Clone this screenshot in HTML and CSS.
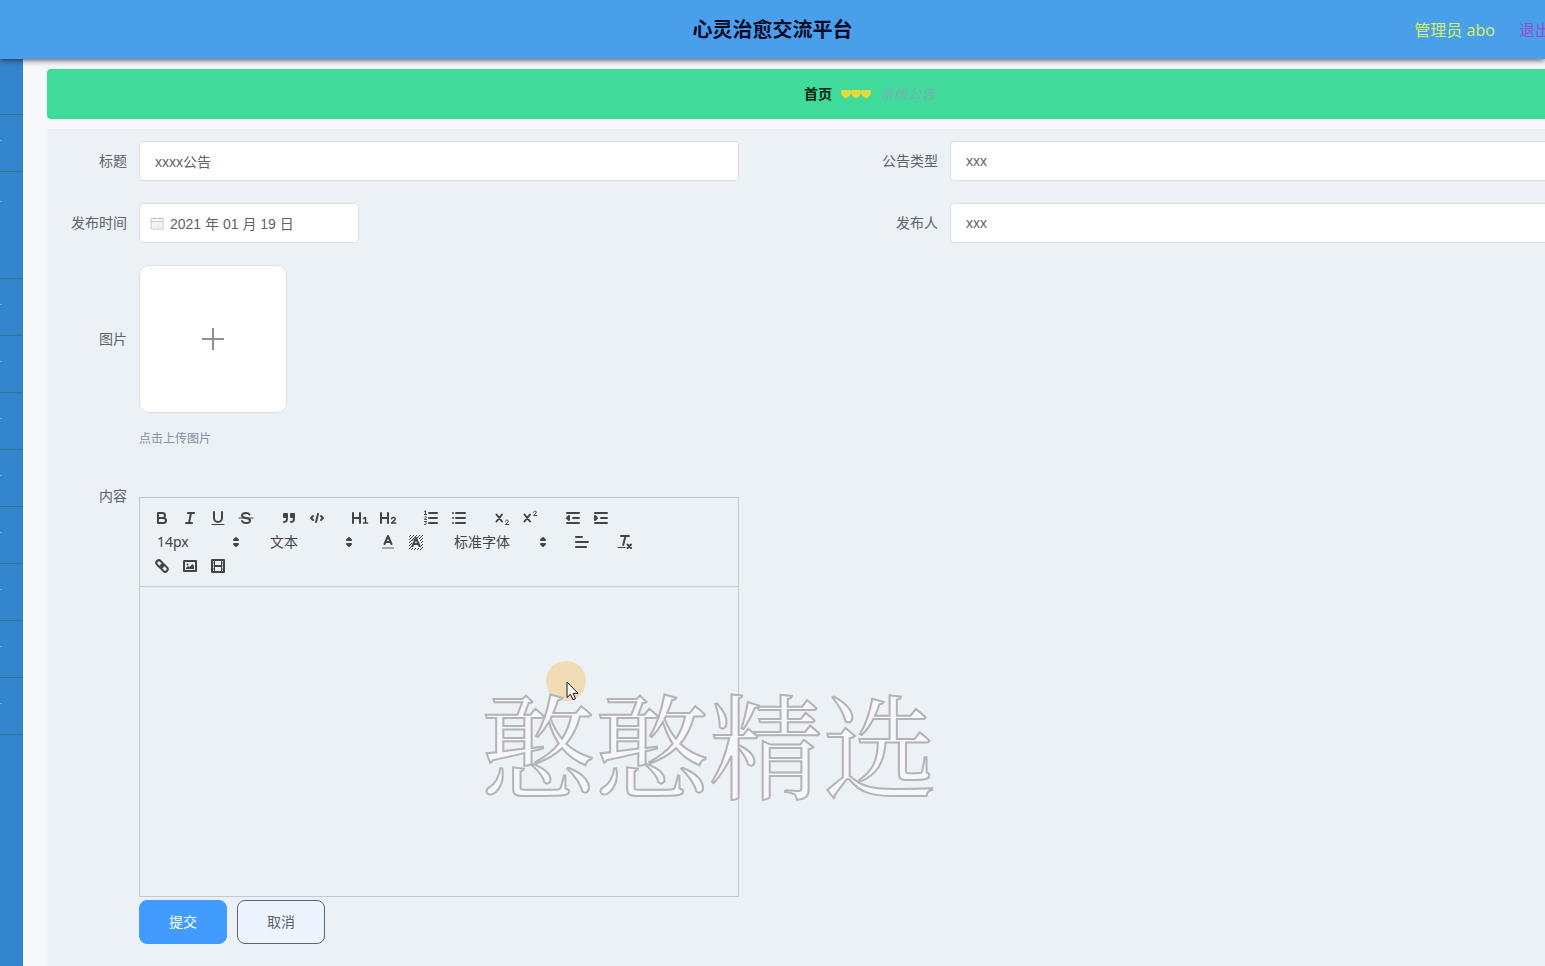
FILE: index.html
```html
<!DOCTYPE html>
<html lang="zh-CN">
<head>
<meta charset="utf-8">
<title>心灵治愈交流平台</title>
<link rel="stylesheet" href="styles.css">
</head>
<body>
<div class="app">
  <header class="topbar">
    <h1 class="topbar-title">心灵治愈交流平台</h1>
    <div class="topbar-user">
      <span class="user-name">管理员 abo</span>
      <a class="logout" href="#">退出登录</a>
    </div>
  </header>
  <div class="shell">
    <nav class="sidebar" aria-label="主菜单">
      <a class="menu-item menu-home" href="#"></a>
      <a class="menu-item" href="#"></a>
      <a class="menu-item menu-tall" href="#"></a>
      <a class="menu-item" href="#"></a>
      <a class="menu-item" href="#"></a>
      <a class="menu-item" href="#"></a>
      <a class="menu-item" href="#"></a>
      <a class="menu-item" href="#"></a>
      <a class="menu-item" href="#"></a>
      <a class="menu-item" href="#"></a>
      <a class="menu-item" href="#"></a>
    </nav>
    <main class="main">
      <div class="content">
        <nav class="breadcrumb" aria-label="面包屑">
          <a class="crumb-home" href="#">首页</a>
          <svg class="hearts" viewBox="0 0 30 10" aria-hidden="true">
            <defs><path id="heart" d="M.4 1.200Q3 .2 5 1.200Q7 .2 9.600 1.200Q10.600 4.200 8.800 6.600Q7 8.800 5 9.500Q3 8.800 1.200 6.600Q-.6 4.200 .4 1.200Z"/></defs>
            <use href="#heart"/><use href="#heart" x="10"/><use href="#heart" x="20"/>
          </svg>
          <span class="crumb-current">系统公告</span>
        </nav>
        <form class="form">
          <div class="field">
            <label class="label" for="title">标题</label>
            <input class="input" id="title" type="text" value="xxxx公告">
          </div>
          <div class="field">
            <label class="label" for="type">公告类型</label>
            <input class="input" id="type" type="text" value="xxx">
          </div>
          <div class="field">
            <label class="label" for="date">发布时间</label>
            <div class="date-box">
              <svg class="date-icon" viewBox="0 0 14 14" aria-hidden="true"><path d="M1 2.500h12v10.500H1zM1 5.500h12M4 1v3M10 1v3M3.500 8h1.500M6.300 8h1.500M9.200 8h1.500M3.500 10.500h1.500M6.300 10.500h1.500M9.200 10.500h1.500"/></svg>
              <input class="date-input" id="date" type="text" value="2021 年 01 月 19 日">
            </div>
          </div>
          <div class="field">
            <label class="label" for="author">发布人</label>
            <input class="input" id="author" type="text" value="xxx">
          </div>
          <div class="field field-row">
            <label class="label label-upload" for="upload">图片</label>
            <div class="upload-block">
              <button class="upload" id="upload" type="button" aria-label="上传图片">
                <svg class="plus" viewBox="0 0 24 24" aria-hidden="true"><path d="M12 1v22M1 12h22"/></svg>
              </button>
              <p class="tip">点击上传图片</p>
            </div>
          </div>
          <div class="field field-row">
            <label class="label label-editor" for="editor">内容</label>
            <div class="editor">
              <div class="toolbar">
                <div class="tools">
                  <button class="tool" type="button" aria-label="粗体"><svg viewBox="0 0 18 18"><path d="M5 4h4.500a2.500 2.500 0 0 1 0 5H5zM5 9h5.500a2.500 2.500 0 0 1 0 5H5z"/></svg></button>
                  <button class="tool" type="button" aria-label="斜体"><svg viewBox="0 0 18 18"><path d="M7 4h6M5 14h6M8 14l2-10"/></svg></button>
                  <button class="tool" type="button" aria-label="下划线"><svg viewBox="0 0 18 18"><path d="M5 3v6a4 4 0 0 0 8 0V3"/><path class="thin" d="M3 15.500h12"/></svg></button>
                  <button class="tool" type="button" aria-label="删除线"><svg viewBox="0 0 18 18"><path class="thin" d="M2 9h14"/><path d="M12.500 5.500C11.800 4.300 10.500 4 9 4 6.500 4 5 5.200 5 6.500 5 8 7 8.600 9 9s4 1 4 2.500S11.500 14 9 14c-2 0-3.200-.6-4-2"/></svg></button>
                </div>
                <div class="tools">
                  <button class="tool" type="button" aria-label="引用"><svg viewBox="0 0 18 18"><path class="quote" d="M4 5h3v3H4zM11 5h3v3h-3z"/><path d="M7 8c0 4-.4 4.500-3 5M14 8c0 4-.4 4.500-3 5"/></svg></button>
                  <button class="tool" type="button" aria-label="代码"><svg viewBox="0 0 18 18"><path d="M5 7L3 9l2 2M13 7l2 2-2 2M10 5L8 13"/></svg></button>
                </div>
                <div class="tools">
                  <button class="tool" type="button" aria-label="标题一"><svg viewBox="0 0 18 18"><path d="M2 4v10M9 4v10M3 9h6"/><path class="medium" d="M12.500 9.500L14.500 8.500V14M12.500 14h4"/></svg></button>
                  <button class="tool" type="button" aria-label="标题二"><svg viewBox="0 0 18 18"><path d="M2 4v10M9 4v10M3 9h6"/><path class="medium" d="M12.500 9.800C13 8 16.500 8.200 16.200 10.300 16 11.500 13 12.800 12.500 14h4.300"/></svg></button>
                </div>
                <div class="tools">
                  <button class="tool" type="button" aria-label="有序列表"><svg viewBox="0 0 18 18"><path d="M7 4h8M7 9h8M7 14h8"/><path class="thin" d="M2.500 2.300l1-.5v3.700M2.500 5.500h2M2.500 8c.5-.8 2-.6 2 .2 0 .8-2 1.300-2 2.300h2M2.500 12.500h2l-1 1.200c1.500 0 1.500 2-1 1.800"/></svg></button>
                  <button class="tool" type="button" aria-label="无序列表"><svg viewBox="0 0 18 18"><path d="M6 4h9M6 9h9M6 14h9M3 4h0M3 9h0M3 14h0"/></svg></button>
                </div>
                <div class="tools">
                  <button class="tool" type="button" aria-label="下标"><svg viewBox="0 0 18 18"><path d="M3.500 5.500l5.500 7M9 5.500l-5.500 7"/><path class="thin" d="M12.500 12.200c.3-1.600 2.900-1.400 2.800.1 0 1.200-2.300 1.900-2.800 3.200h3.200"/></svg></button>
                  <button class="tool" type="button" aria-label="上标"><svg viewBox="0 0 18 18"><path d="M3.500 5.500l5.500 7M9 5.500l-5.500 7"/><path class="thin" d="M12.500 3.200c.3-1.600 2.900-1.400 2.800.1 0 1.200-2.300 1.900-2.800 3.200h3.200"/></svg></button>
                </div>
                <div class="tools">
                  <button class="tool" type="button" aria-label="减少缩进"><svg viewBox="0 0 18 18"><path d="M3 14h12M3 4h12M9 9h6"/><path class="solid round" d="M5 7v4L3 9z"/></svg></button>
                  <button class="tool" type="button" aria-label="增加缩进"><svg viewBox="0 0 18 18"><path d="M3 14h12M3 4h12M9 9h6"/><path class="solid round" d="M3 7v4l2-2z"/></svg></button>
                </div>
                <div class="tools">
                  <div class="picker">
                    <select class="picker-select" aria-label="字号"><option>14px</option><option>16px</option></select>
                    <svg class="picker-arrow" viewBox="0 0 18 18"><path class="solid round" d="M7 7l2-2 2 2zM7 11l2 2 2-2z"/></svg>
                  </div>
                </div>
                <div class="tools">
                  <div class="picker">
                    <select class="picker-select" aria-label="段落"><option>文本</option><option>标题</option></select>
                    <svg class="picker-arrow" viewBox="0 0 18 18"><path class="solid round" d="M7 7l2-2 2 2zM7 11l2 2 2-2z"/></svg>
                  </div>
                </div>
                <div class="tools">
                  <button class="tool" type="button" aria-label="文字颜色"><svg viewBox="0 0 18 18"><path class="faded" d="M3 15h12"/><path d="M5.500 11L9 3l3.500 8M11.600 9H6.400"/></svg></button>
                  <button class="tool" type="button" aria-label="背景颜色"><svg viewBox="0 0 18 18"><path class="hatch" d="M2 4l2-2M2 7l5-5M2 10l8-8M2 13l3-3M2 16l3-3M4 17l2-2M7 17l2-2M10 17l2-2M10 5l3-3M12 6l4-4M13 8l3-3M14 10l2-2M13 14l3-3M13 17l3-3M7 5L5 8"/><path d="M5.500 13L9 5l3.500 8M11.600 11H6.400"/></svg></button>
                </div>
                <div class="tools">
                  <div class="picker picker-font">
                    <select class="picker-select" aria-label="字体"><option>标准字体</option><option>衬线字体</option></select>
                    <svg class="picker-arrow" viewBox="0 0 18 18"><path class="solid round" d="M7 7l2-2 2 2zM7 11l2 2 2-2z"/></svg>
                  </div>
                </div>
                <div class="tools">
                  <button class="tool" type="button" aria-label="对齐"><svg viewBox="0 0 18 18"><path d="M3 9h12M3 14h10M3 4h6"/></svg></button>
                </div>
                <div class="tools">
                  <button class="tool" type="button" aria-label="清除格式"><svg viewBox="0 0 18 18"><path d="M5 3h8M9.500 3L7.200 12"/><path class="thin" d="M2 14.500h7"/><path d="M11.500 11.500l3.500 3.500M15 11.500l-3.500 3.500"/></svg></button>
                </div>
                <div class="tools">
                  <button class="tool" type="button" aria-label="链接"><svg viewBox="0 0 18 18"><g transform="rotate(45 9 9)"><rect x="2" y="6.500" width="8" height="5" rx="2.500"/><rect x="8" y="6.500" width="8" height="5" rx="2.500"/></g></svg></button>
                  <button class="tool" type="button" aria-label="图片"><svg viewBox="0 0 18 18"><path d="M3 4h12v10H3z"/><circle class="fill" cx="6.500" cy="7.500" r="1"/><path class="fill" d="M5 12v-1l2-2 1.500 1L11.500 7l1.500 2V12z"/></svg></button>
                  <button class="tool" type="button" aria-label="视频"><svg viewBox="0 0 18 18"><path d="M3 3h12v12H3z"/><path class="thin" d="M5.500 3v12M12.500 3v12M3 6h2.500M3 9h2.500M3 12h2.500M12.500 6H15M12.500 9H15M12.500 12H15"/><path d="M6 9h6"/></svg></button>
                </div>
              </div>
              <textarea class="editor-area" id="editor"></textarea>
            </div>
          </div>
          <div class="actions">
            <button class="btn btn-primary" type="submit">提交</button>
            <button class="btn btn-plain" type="button">取消</button>
          </div>
        </form>
      </div>
    </main>
  </div>
  <div class="pointer" aria-hidden="true">
    <svg class="pointer-arrow" viewBox="0 0 13 20"><path d="M1 1v15.500l3.500-3.300 2.500 5.600 2.500-1.100L7.100 12.300H12z"/></svg>
  </div>
  <div class="watermark">憨憨精选</div>
</div>
</body>
</html>
```
FILE: styles.css
```css
* {
  box-sizing: border-box;
}

body {
  margin: 0;
  font-family: "Liberation Sans", "Noto Sans CJK SC", sans-serif;
  font-size: 14px;
  color: #606266;
}

a {
  color: inherit;
  text-decoration: none;
}

button, input, select, textarea {
  font: inherit;
  color: inherit;
}

.app {
  position: relative;
  display: flex;
  flex-direction: column;
  min-height: 100vh;
  overflow: hidden;
}

.topbar {
  position: relative;
  z-index: 1;
  display: grid;
  grid-template-columns: 1fr auto 1fr;
  align-items: center;
  height: 59px;
  background: #4a9feb;
  box-shadow: 0 1px 6px rgba(40, 20, 30, 0.8);
  font-family: "Noto Sans", "Noto Sans CJK SC", sans-serif;
}

.topbar-title {
  grid-column: 2;
  margin: 0;
  font-size: 20px;
  line-height: 30px;
  font-weight: 700;
  color: #050a28;
}

.topbar-user {
  display: flex;
  justify-content: flex-end;
  gap: 24px;
  margin-right: -38px;
  font-size: 16px;
  line-height: 24px;
  white-space: nowrap;
}

.user-name {
  color: #d2f064;
}

.logout {
  color: #9a50cc;
}

.shell {
  display: flex;
  flex: 1;
}

.sidebar {
  flex: none;
  width: 23px;
  background: #3385ce;
}

.menu-item {
  display: block;
  height: 57px;
  padding-top: 25px;
  border-bottom: 1px solid #2f7588;
}

.menu-item::before {
  content: "";
  display: block;
  width: 2px;
  height: 1px;
  background: #74aadc;
}

.menu-home {
  height: 56px;
}

.menu-home::before {
  display: none;
}

.menu-tall {
  height: 107px;
  padding-top: 29px;
}

.main {
  flex: 1;
  min-width: 0;
  padding: 10px 0 0 24px;
  background: #f6f8fc;
}

/* The content area runs past the right edge of the window. */
.content {
  display: flex;
  flex-direction: column;
  gap: 10px;
  height: 100%;
  margin-right: -148px;
}

.breadcrumb {
  display: flex;
  align-items: center;
  justify-content: center;
  gap: 9px;
  height: 50px;
  background: #40db9a;
  border-radius: 4px;
  line-height: 20px;
}

.crumb-home {
  font-weight: 700;
  color: #052010;
}

.hearts {
  width: 30px;
  height: 10px;
  fill: #e8d83c;
}

.crumb-current {
  color: #72b4b4;
  font-style: italic;
}

.form {
  flex: 1;
  display: grid;
  grid-template-columns: 1fr 1fr;
  align-content: start;
  row-gap: 22px;
  padding: 12px 12px 22px;
  background: #ecf1f6;
}

.field {
  display: flex;
  min-width: 0;
}

.field-row {
  grid-column: 1 / -1;
}

.label {
  flex: none;
  width: 80px;
  padding-right: 12px;
  line-height: 40px;
  text-align: right;
}

.input {
  width: 600px;
  height: 40px;
  padding: 0 15px;
  background: #fff;
  border: 1px solid #dcdfe6;
  border-radius: 4px;
}

.date-box {
  display: flex;
  align-items: center;
  gap: 6px;
  width: 220px;
  height: 40px;
  padding: 0 10px;
  background: #fff;
  border: 1px solid #dcdfe6;
  border-radius: 4px;
}

.date-icon {
  flex: none;
  width: 14px;
  height: 14px;
  fill: none;
  stroke: #c0c4cc;
}

.date-input {
  min-width: 0;
  padding: 0;
  background: none;
  border: 0;
}

.label-upload {
  line-height: 148px;
}

.upload {
  display: grid;
  place-items: center;
  width: 148px;
  height: 148px;
  padding: 0;
  background: #fff;
  border: 1px solid #dcdfe6;
  border-radius: 10px;
}

.plus {
  width: 24px;
  height: 24px;
  fill: none;
  stroke: #8c909a;
  stroke-width: 2;
}

.tip {
  margin: 16px 0 14px;
  font-size: 12px;
  line-height: 20px;
  color: #8590a2;
}

.label-editor {
  line-height: 22px;
}

.editor {
  width: 600px;
  height: 400px;
  margin-top: 12px;
  display: flex;
  flex-direction: column;
  border: 1px solid #c3c9d0;
}

.toolbar {
  display: flex;
  flex-wrap: wrap;
  padding: 8px;
  border-bottom: 1px solid #c3c9d0;
}

.tools {
  display: flex;
  margin-right: 15px;
}

.tool {
  width: 28px;
  height: 24px;
  padding: 3px 5px;
  background: none;
  border: 0;
}

.tool svg, .picker-arrow {
  display: block;
  width: 18px;
  height: 18px;
  fill: none;
  stroke: #444;
  stroke-width: 2;
  stroke-linecap: round;
  stroke-linejoin: round;
}

.tool .thin {
  stroke-width: 1;
}

.tool .medium {
  stroke-width: 1.5;
}

.tool .hatch {
  stroke-width: 1;
  stroke-linecap: butt;
}

.tool .faded {
  stroke: #a5a8ab;
  stroke-linecap: butt;
}

.solid, .quote {
  fill: #444;
}

.fill {
  fill: #444;
  stroke: none;
}

.picker {
  position: relative;
  width: 98px;
  height: 24px;
}

.picker-font {
  width: 108px;
}

.picker-select {
  appearance: none;
  display: block;
  width: 100%;
  height: 24px;
  padding: 0 24px 2px 9px;
  background: none;
  border: 0;
  color: #444;
  font-family: "Noto Sans", "Noto Sans CJK SC", sans-serif;
}

.picker-arrow {
  position: absolute;
  top: 3px;
  right: 1px;
  pointer-events: none;
}

.picker-arrow .solid {
  stroke-width: 2;
}

.editor-area {
  flex: 1;
  width: 100%;
  padding: 12px 15px;
  background: none;
  border: 0;
  resize: none;
}

.actions {
  grid-column: 1 / -1;
  display: flex;
  gap: 10px;
  margin-top: -19px;
  padding-left: 80px;
}

.btn {
  width: 88px;
  height: 44px;
  padding: 0 0 2px;
  border: 1px solid;
  border-radius: 8px;
}

.btn-primary {
  background: #429cff;
  border-color: #429cff;
  color: #fff;
}

.btn-plain {
  background: #ecf4ff;
  border-color: #606470;
}

/* Overlays drawn on top of the page. */
.pointer {
  position: absolute;
  left: 546px;
  top: 661px;
  z-index: 2;
  width: 40px;
  height: 40px;
  padding: 20px 0 0 20px;
  background: #f0dbb4;
  border-radius: 50%;
  pointer-events: none;
}

.pointer-arrow {
  display: block;
  width: 13px;
  height: 20px;
  fill: #fff;
  stroke: #111;
}

.watermark {
  position: absolute;
  left: 481px;
  top: 684px;
  z-index: 3;
  font-family: "Noto Serif CJK SC", "Noto Sans CJK SC", serif;
  font-size: 114px;
  font-weight: 400;
  line-height: 114px;
  white-space: nowrap;
  color: #f6f6fb;
  -webkit-text-stroke: 2px #b3b3b8;
  pointer-events: none;
}
```
